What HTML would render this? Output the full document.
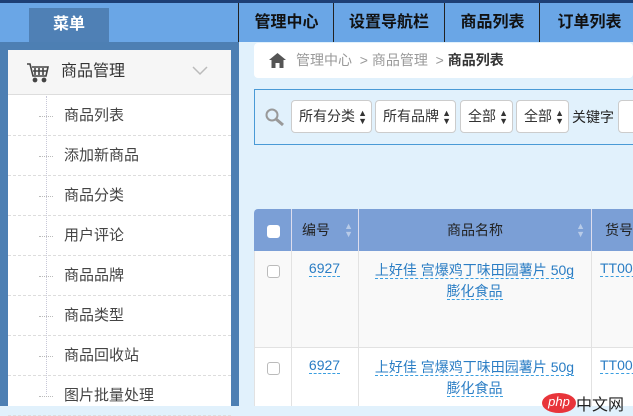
<!DOCTYPE html>
<html><head><meta charset="utf-8"><style>
*{margin:0;padding:0;box-sizing:border-box}
body{width:633px;height:406px;overflow:hidden;position:relative;background:#e1f1fc;font-family:"Liberation Sans","Noto Sans CJK SC",sans-serif;}
.abs{position:absolute}
#top{left:0;top:0;width:633px;height:3px;background:#1d3f75}
#bar{left:0;top:3px;width:633px;height:39px;background:#6aa6e6}
#tab{left:29px;top:8px;width:80px;height:34px;background:#4f80b5;color:#fff;font-size:16px;font-weight:bold;text-align:center;line-height:34px}
.nav{top:3px;height:39px;line-height:39px;font-size:16px;font-weight:bold;color:#111;text-align:center;border-left:1px solid #222}
#side{left:0;top:42px;width:239px;height:364px;background:#4d7fb3}
#panel{left:8px;top:50px;width:223px;height:356px;background:#fff}
#ph{left:0;top:0;width:223px;height:45px;background:#f6f6f6;border-bottom:1px solid #ddd;font-size:16px;color:#333;line-height:44px;padding-left:53px}
.it{left:0;width:223px;height:40px;border-bottom:1px dashed #ddd;font-size:15px;color:#444;line-height:40px;padding-left:56px}
.it:before{content:"";position:absolute;left:31px;top:20px;width:14px;border-top:1px dotted #bbb}
#vline{left:38px;top:46px;height:298px;border-left:1px dotted #c8c8d8}
#bc{left:254px;top:43px;width:379px;height:35px;background:#fff;border-radius:4px;font-size:14px;color:#999;line-height:35px;padding-left:42px}
#sb{left:254px;top:89px;width:390px;height:56px;border:1px solid #4a9ad6}
.sel{top:100px;height:33px;background:#fff;border:1px solid #ccc;border-radius:4px;font-size:14px;color:#333;line-height:31px;padding-left:7px}
.sel i{position:absolute;right:4px;top:0;font-style:normal;font-size:9px;line-height:8px;padding-top:8px;color:#333}
#th{left:254px;top:209px;width:379px;height:42px;background:#7b9fd6;border-radius:4px 0 0 0}
.thc{top:209px;height:42px;line-height:42px;font-size:14px;color:#222;border-left:1px solid #dde}
.cell{border-left:1px solid #e2e2e2}
a{color:#2a7dc4;text-decoration:none;border-bottom:1px dashed #3a9ee0}
.cb{width:13px;height:13px;border:1px solid #bbb;border-radius:3px;background:#fff}
</style></head><body>
<div class="abs" id="top"></div>
<div class="abs" id="bar"></div>
<div class="abs" id="tab">菜单</div>
<div class="abs nav" style="left:238px;width:96px">管理中心</div>
<div class="abs nav" style="left:333px;width:111px">设置导航栏</div>
<div class="abs nav" style="left:444px;width:96px">商品列表</div>
<div class="abs nav" style="left:539px;width:100px">订单列表</div>
<div class="abs" id="side"></div>
<div class="abs" id="panel">
 <div class="abs" id="ph">商品管理</div>
 <svg class="abs" style="left:18px;top:10px" width="24" height="24" viewBox="0 0 24 24" fill="none" stroke="#444" stroke-width="1.6"><path d="M1 4h3l3 12h13l2-9H6"/><path d="M9 8v7M13 8v7M17 8v7M7 11h14"/><circle cx="9" cy="20" r="1.6" fill="#444"/><circle cx="18" cy="20" r="1.6" fill="#444"/></svg>
 <svg class="abs" style="left:184px;top:16px" width="16" height="10"><path d="M1 1l7 7 7-7" stroke="#bbb" stroke-width="1.5" fill="none"/></svg>
 <div class="abs" id="vline"></div>
 <div class="abs it" style="top:46px">商品列表</div>
 <div class="abs it" style="top:86px">添加新商品</div>
 <div class="abs it" style="top:126px">商品分类</div>
 <div class="abs it" style="top:166px">用户评论</div>
 <div class="abs it" style="top:206px">商品品牌</div>
 <div class="abs it" style="top:246px">商品类型</div>
 <div class="abs it" style="top:286px">商品回收站</div>
 <div class="abs it" style="top:326px">图片批量处理</div>
</div>
<div class="abs" id="bc">管理中心 &nbsp;&gt; 商品管理 &nbsp;&gt; <span style="color:#333;font-weight:bold">商品列表</span></div>
<svg class="abs" style="left:269px;top:52px" width="17" height="17" viewBox="0 0 17 17"><path d="M8.5 1L0 8h2.5v8h4v-5h4v5h4V8H17z" fill="#555"/></svg>
<div class="abs" id="sb"></div>
<svg class="abs" style="left:264px;top:107px" width="22" height="20"><circle cx="8" cy="8" r="5.5" fill="none" stroke="#999" stroke-width="2"/><path d="M12 12l7 6" stroke="#999" stroke-width="3"/></svg>
<div class="abs sel" style="left:291px;width:81px">所有分类<i>▲<br>▼</i></div>
<div class="abs sel" style="left:375px;width:81px">所有品牌<i>▲<br>▼</i></div>
<div class="abs sel" style="left:460px;width:53px">全部<i>▲<br>▼</i></div>
<div class="abs sel" style="left:516px;width:53px">全部<i>▲<br>▼</i></div>
<div class="abs" style="left:572px;top:107px;font-size:14px;color:#222">关键字</div>
<div class="abs sel" style="left:618px;width:30px"></div>
<div class="abs" id="th"></div>
<div class="abs cb" style="left:267px;top:225px;border-color:#fff"></div>
<div class="abs thc" style="left:291px;width:68px;padding-left:10px">编号<span style="position:absolute;right:6px;color:#b8cbe8;font-size:9px;line-height:8px;top:13px">▲<br>▼</span></div>
<div class="abs thc" style="left:358px;width:233px;text-align:center">商品名称<span style="position:absolute;right:6px;color:#b8cbe8;font-size:9px;line-height:8px;top:13px">▲<br>▼</span></div>
<div class="abs thc" style="left:591px;width:50px;padding-left:13px">货号</div>
<div class="abs" style="left:254px;top:251px;width:379px;height:97px;background:#f9f9f9;border-bottom:1px solid #e2e2e2"></div>
<div class="abs" style="left:254px;top:348px;width:379px;height:58px;background:#fff"></div>
<div class="abs cell" style="left:291px;top:251px;height:155px"></div>
<div class="abs cell" style="left:358px;top:251px;height:155px"></div>
<div class="abs cell" style="left:591px;top:251px;height:155px"></div>
<div class="abs" style="left:254px;top:251px;height:155px;border-left:1px solid #e2e2e2"></div>
<div class="abs cb" style="left:267px;top:265px"></div>
<div class="abs cb" style="left:267px;top:362px"></div>
<div class="abs" style="left:291px;top:260px;width:67px;text-align:center;font-size:14px"><a>6927</a></div>
<div class="abs" style="left:291px;top:357px;width:67px;text-align:center;font-size:14px"><a>6927</a></div>
<div class="abs" style="left:358px;top:260px;width:233px;text-align:center;font-size:14px;line-height:21px"><a>上好佳 宫爆鸡丁味田园薯片 50g</a><br><a>膨化食品</a></div>
<div class="abs" style="left:358px;top:357px;width:233px;text-align:center;font-size:14px;line-height:21px"><a>上好佳 宫爆鸡丁味田园薯片 50g</a><br><a>膨化食品</a></div>
<div class="abs" style="left:600px;top:260px;font-size:14px"><a>TT006</a></div>
<div class="abs" style="left:600px;top:357px;font-size:14px"><a>TT006</a></div>
<div class="abs" style="left:542px;top:393px;width:34px;height:20px;border-radius:50%;background:#e8343a;color:#fff;font-size:13px;text-align:center;line-height:17px;font-style:italic">php</div>
<div class="abs" style="left:576px;top:391px;font-size:16px;color:#222">中文网</div>
</body></html>
